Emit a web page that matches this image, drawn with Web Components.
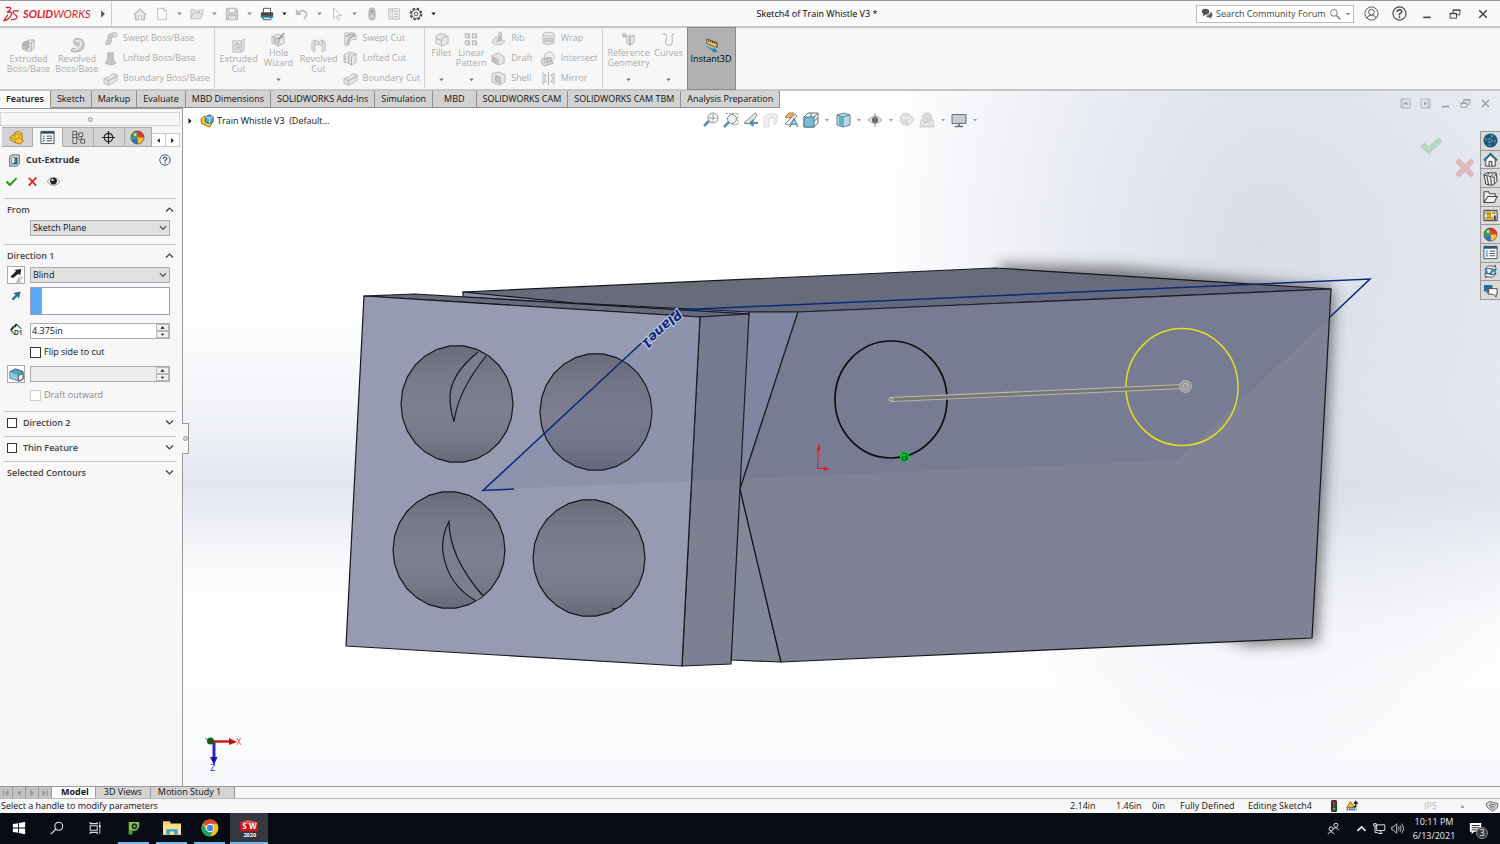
<!DOCTYPE html>
<html lang="en">
<head>
<meta charset="utf-8">
<title>SOLIDWORKS - Sketch4 of Train Whistle V3</title>
<style>
	body {
		margin: 0;
		font-family: "Open Sans", "Noto Sans", sans-serif;
		font-size: 9px;
		line-height: 12px;
		color: #111;
	}
</style>
</head>
<body>
<cad-app></cad-app>

<script>
/*
Icons, all drawn on a 16 x 16 grid
*/
const G = 'fill="#e6e6e6" stroke="#b9b9b9"';
const ICONS = {
	caret: '<path d="M4 6h8l-4 5z" fill="currentColor"/>',
	play: '<path d="M5 2v12l6-6z" fill="currentColor"/>',
	back: '<path d="M11 3v10L5 8z" fill="currentColor"/>',
	up: '<path d="M3 11h10L8 5z" fill="currentColor"/>',
	chevup: '<path d="M3 11l5-5 5 5" fill="none" stroke="currentColor" stroke-width="2"/>',
	chevdown: '<path d="M3 5l5 5 5-5" fill="none" stroke="currentColor" stroke-width="2"/>',
	dslogo: '<g fill="none" stroke="#d8232a" stroke-width="1.3"><path d="M3 1.500h4q1.500.5 0 2.500L4 6.500q5-1.500 4.500 1.500C8 11 5 14 1 14.500L5 8.500"/><path d="M15.500 5q-5-1-5.500 1.500c0 2 4 2 4 4.500q-.5 3-6 2.500"/></g>',
	home: `<path d="M1 9l7-7 7 7M3 8v6.500h10V8" ${G} stroke-width="1.400"/><path d="M6.500 14.500v-5h3v5" fill="#fff" stroke="#b9b9b9"/>`,
	newdoc: '<path d="M3 1.500h7l3 3v10H3zM10 1.500v3h3" fill="#f9f9f9" stroke="#bcbcbc"/>',
	open: `<path d="M1 13V3h4l1 1.500h5V7M1 13.500L4 7h11l-3 6.500z" ${G}/><path d="M10 4q2-3 4 0l-1.500.5 2.500 1V2" fill="none" stroke="#bbb"/>`,
	save: `<path d="M1.500 1.500h11l2 2v11h-13z" fill="#cfcfcf" stroke="#b5b5b5"/><path d="M4.500 1.500h7v5h-7zM4 9.500h8v5H4zM5 11.500h6" fill="#f5f5f5" stroke="#b5b5b5"/>`,
	print: '<path d="M4 7V1.500h8V7" fill="#fff" stroke="#444"/><rect x="1" y="6" width="14" height="5" rx="1" fill="#484848"/><path d="M1 10h14v2.500H1z" fill="#2a83a8"/><path d="M3.500 11.500h9v3h-9z" fill="#d8eef5" stroke="#33596b"/>',
	undo: '<path d="M2 3v5h5M2.500 7.500Q7 2.500 11.500 5q4 4-1.500 8.500" fill="none" stroke="#bdbdbd" stroke-width="2"/>',
	cursor: '<path d="M4 1v12l3-3 2 5 2-1-2-4.500h4z" fill="#fafafa" stroke="#bcbcbc"/>',
	rebuild: '<rect x="4.500" y="1" width="7" height="14" rx="3.500" fill="#c2c2c2" stroke="#a9a9a9"/><circle cx="8" cy="5" r="1.500" fill="#989898"/><circle cx="8" cy="10.500" r="1.500" fill="#ddd"/>',
	options: '<path d="M2 2h12v12H2zM6 2v12" fill="#f0f0f0" stroke="#bdbdbd"/><path d="M3.500 5h1M3.500 8h1M3.500 11h1M8 5h4.500M8 8h4.500M8 11h4.500" stroke="#b4b4b4"/>',
	gear: '<circle cx="8" cy="8" r="6.300" fill="none" stroke="#4a4a4a" stroke-width="2" stroke-dasharray="3 1.950"/><circle cx="8" cy="8" r="5" fill="#f8f8f8" stroke="#4a4a4a"/><circle cx="8" cy="8" r="2" fill="none" stroke="#4a4a4a"/>',
	chat: '<path d="M1 5q0-4 5-4t5 4-5 4l-3 2V8Q1 7 1 5z" fill="#555"/><path d="M6 10q6 0 6.500-5Q16 6 15.500 9q0 2-1.500 3v2.500L11 13q-4 0-5-3z" fill="#555" stroke="#fff" stroke-width=".7"/>',
	search: '<circle cx="6.500" cy="6.500" r="4.500" fill="none" stroke="currentColor" stroke-width="1.300"/><path d="M10 10l5 5" stroke="currentColor" stroke-width="1.800"/>',
	user: '<circle cx="8" cy="8" r="7" fill="none" stroke="#555"/><circle cx="8" cy="6.500" r="3" fill="none" stroke="#555"/><path d="M3 13q1-3 4-3h2q3 0 4 3" fill="none" stroke="#555"/>',
	help: '<circle cx="8" cy="8" r="7" fill="none" stroke="currentColor" stroke-width="1.200"/><path d="M5.500 6.500Q5.500 4 8 4t2.500 2.200Q10.500 7.500 8 8.500V10M8 11v1.800" fill="none" stroke="currentColor" stroke-width="1.500"/>',
	min: '<path d="M3 12.500h10" stroke="currentColor" stroke-width="2.200"/>',
	restore: '<path d="M5.500 7V2.500h9V9H10M1.500 7H10v6.500H1.500z" fill="none" stroke="currentColor" stroke-width="1.300"/><path d="M5 3h10M1 7.500h9" stroke="currentColor" stroke-width="1.500"/>',
	close: '<path d="M3 3l10 10M13 3L3 13" stroke="currentColor" stroke-width="2"/>',
	dockleft: '<path d="M1.500 1.500h13v13h-13zM4.500 1.500v13" fill="none" stroke="currentColor"/><path d="M10.500 5v6L6 8z" fill="currentColor"/>',
	dockright: '<path d="M1.500 1.500h13v13h-13zM11.500 1.500v13" fill="none" stroke="currentColor"/><path d="M6 5v6l4-3z" fill="currentColor"/>',
	exboss: `<path d="M5 4l3-2h6v9l-3 3H5z" ${G}/><path d="M1.500 6l2-2h5v6l-2 2h-5z" fill="#bdbdbd" stroke="#aaa"/><path d="M1.500 6h5v6M6.500 6l2-2M11 14V5l3-3" fill="none" stroke="#aaa"/>`,
	revboss: '<path d="M5 1q8-2 10 4 1 6-4 9-5 2-10 0 0-3 3-3 5 1 5-2-2-1-4-2-3-3 0-6z" fill="#c9c9c9" stroke="#b0b0b0"/><path d="M6 3q5-1 6 3-1 5-8 7" fill="none" stroke="#f2f2f2" stroke-width="1.500"/>',
	sweep: '<path d="M3 12q5 1 4-4 0-4 5-4" fill="none" stroke="#b3b3b3" stroke-width="5"/><path d="M3 12q5 1 4-4 0-4 5-4" fill="none" stroke="#ccc" stroke-width="3"/><circle cx="12.500" cy="4" r="2.500" fill="#e4e4e4" stroke="#b3b3b3"/>',
	loft: '<path d="M5 2l6 0v7l3 4-5 2-7-2 3-4z" fill="#c4c4c4" stroke="#b3b3b3"/><path d="M5 2l3 1 3-1" fill="#eee" stroke="#b3b3b3"/>',
	boundary: `<path d="M1 8q6-1 9-5l5 1v6q-4 3-9 5l-5-2z" ${G}/><path d="M1 8l5 2q6-2 9-6M6 10v5M3 11q6-1 11-5" fill="none" stroke="#b3b3b3"/>`,
	excut: `<path d="M2 3h9l3-2v12l-3 2H2z" ${G}/><path d="M11 3v12M4.500 6h4v6h-4zM6.500 6v4h2" fill="#f8f8f8" stroke="#b0b0b0"/>`,
	hole: `<path d="M1 5l6-3 7 3v7l-6 3-7-3z" ${G}/><path d="M1 5l7 3 6-3M8 8v7" fill="none" stroke="#b3b3b3"/><circle cx="6" cy="9" r="3" fill="#ccc" stroke="#aaa"/><path d="M8 8l6-7" stroke="#999" stroke-width="1.800"/>`,
	revcut: `<path d="M1 4l3-2 4 2 4-2 3 2v9l-3 2V8q-4-3-8 0v7l-3-2z" ${G}/><path d="M4 2v6M12 2v6M8 4v3" stroke="#b0b0b0"/>`,
	swcut: `<path d="M2 2h10l2 2v5h-3q-4 0-5 6H2z" ${G}/><path d="M5 14q0-8 8-9M3 6q4-3 10-2" fill="none" stroke="#aaa" stroke-width="1.500"/>`,
	lfcut: `<path d="M1 4l6-3 7 2v9l-5 3-3-2-5-1z" ${G}/><path d="M6 13V5l3-2M9 15V6l5-3M2 5v6" fill="none" stroke="#aaa"/>`,
	fillet: `<path d="M2 6q0-3 3-4h6l4 3v7l-6 3-7-3z" ${G}/><path d="M2 7l6 2q0-4 6-4M8 9v6" fill="none" stroke="#b3b3b3"/>`,
	pattern: '<path d="M1.500 2h4v4h-4zM9 2h4v4H9zM1.500 9.500h4v4h-4zM9 9.500h4v4H9z" fill="#eee" stroke="#b9b9b9" stroke-width="1.200"/><path d="M4 3l2 1v3M11.500 3l2 1v3M4 10.500l2 1v3M11.500 10.500l2 1v3" fill="none" stroke="#b9b9b9"/>',
	rib: `<path d="M1 12l3-5 4-1V2l3-1v8l4 2-3 3-7 1z" ${G}/><path d="M5 12l6-10v9z" fill="#bbb"/>`,
	draft: `<path d="M1 5l7-3 6 4v7l-6 2-7-4z" ${G}/><path d="M1 5l7 4v6l-7-4z" fill="#bdbdbd"/>`,
	shell: `<path d="M1 3l7-2 7 3v8l-6 3-8-3z" ${G}/><path d="M5 5l5 2v6l-5-2z" fill="#c5c5c5" stroke="#aaa"/>`,
	wrap: `<path d="M2 3v10q6 3 12 0V3z" ${G}/><ellipse cx="8" cy="3.500" rx="6" ry="2" fill="#eee" stroke="#b9b9b9"/><path d="M4 8h3v3H4zM9 8h3v3H9z" fill="none" stroke="#aaa"/>`,
	intersect: '<circle cx="9" cy="6" r="5" fill="#eee" stroke="#b5b5b5"/><path d="M1 8l3-1v6l8-2 1 2-9 3-3-2z" fill="#ddd" stroke="#b0b0b0"/><path d="M6 7h5v4l-5 1z" fill="#c9c9c9" stroke="#b0b0b0"/>',
	mirror: '<path d="M2 2v12l4-3H4V5h2zM14 2v12l-4-3h2V5h-2z" fill="#eee" stroke="#b9b9b9"/><path d="M8 1v14" stroke="#aaa"/>',
	refgeo: `<circle cx="3.500" cy="3.500" r="2" fill="#ccc" stroke="#b0b0b0"/><path d="M6 4l3 1v9l-3-2zM10 5l4-2v8l-4 3z" ${G}/><path d="M9.500 2v13" stroke="#b9b9b9"/>`,
	curves: '<path d="M2 2q5 0 4 4-3 7 1 8 6 1 5-7-1-5 2-5" fill="none" stroke="#b9b9b9" stroke-width="1.200"/>',
	instant: '<path d="M3 1l11 4v5L3 6z" fill="#ffd23f" stroke="#222" stroke-width=".7"/><path d="M5 2v2M7 3v2M9 3.500v2M11 4v2M13 5v2" stroke="#222"/><path d="M1 8l9 4 .5-2 4.500 5-6 .5.500-1.500z" fill="#2d86ad"/>',
	part: '<path d="M1 8l3-3 2 1V3l4-2 4 3v5l1 3-3 3-4-1-6-3z" fill="#f7c834" stroke="#8a6410" stroke-width=".8"/><path d="M1 8l6 2v4M7 10l4-2 4 3M11 8V5l3-1M6 3l5 2M6 6v2" fill="none" stroke="#a97c17" stroke-width=".8"/>',
	partbox: '<path d="M1 6l3-3h4l6 7-3 5-9-4z" fill="#f7c834" stroke="#8a6410"/><path d="M6 3l5-2 4 2v6l-4 2-5-2z" fill="#5aa9c9" stroke="#155a78"/><path d="M6 3l5 2 4-2M11 5v6" fill="none" stroke="#e3f4fb"/>',
	plist: '<path d="M1 1.500h14v13H1z" fill="#fff" stroke="#34576b"/><path d="M1 1h14v3H1z" fill="#34576b"/><path d="M3 6.500h2M3 9h2M3 11.500h2" stroke="#2584ac" stroke-width="1.500"/><path d="M7 6.500h6M7 9h6M7 11.500h6" stroke="#444"/>',
	config: '<path d="M2 1.500h4v13H2z" fill="#ddd" stroke="#555"/><path d="M8.500 3h4v4h-4zM10.500 10h4v4h-4z" fill="#ddd" stroke="#555"/><path d="M2 5h4M2 8h4M6 4l2.500 1M6 7l4.500 5M11 7v3" fill="none" stroke="#555"/>',
	target: '<circle cx="8" cy="8" r="4.500" fill="none" stroke="#222" stroke-width="1.300"/><path d="M8 1v14M1 8h14" stroke="#222" stroke-width="1.300"/>',
	ball: '<circle cx="8" cy="8" r="7" fill="#f4c430"/><path d="M8 8L7 1a7 7 0 0 0-5.500 9.500z" fill="#35a547"/><path d="M8 8L7 1q7-.5 8 7z" fill="#e23a2e"/><path d="M8 8L1.500 10.500q2 4.500 7 4.500z" fill="#2d6fd0"/><circle cx="8" cy="8" r="7" fill="none" stroke="#333" stroke-width=".6"/><circle cx="5.500" cy="5" r="1.500" fill="#fff" opacity=".7"/>',
	cutfeat: '<path d="M2 3l3-2h9v11l-3 3H2z" fill="#c7ccd0" stroke="#5a6166"/><path d="M5 5h6v7H5z" fill="#2584ac" stroke="#333"/><path d="M5 5h3v5l-3 2z" fill="#f2f2f2"/>',
	tick: '<path d="M1 9l2-2 3 3.500L13.500 3l1.500 1.500L6 14z" fill="#2a9a13"/>',
	cross: '<path d="M3.500 3.500l9 9.500M12.500 3l-9 10" stroke="#df2716" stroke-width="2.200"/>',
	bigtick: '<path d="M1 9l2.500-2.500L6.500 9 13 3l2.500 2.500-9 8.500z" fill="#3fae3a" stroke="#2d8a2d" stroke-width=".5"/>',
	bigcross: '<path d="M4 4l8 8M12 4l-8 8" stroke="#dc3434" stroke-width="4" stroke-linecap="round"/>',
	eye: '<path d="M0 8q8-10 16 0-8 10-16 0z" fill="#fff" stroke="#777"/><circle cx="8" cy="7.500" r="4.200" fill="#222"/><circle cx="6.800" cy="6" r="1.300" fill="#fff"/>',
	reverse: '<path d="M1.500 9l6-5.500L6 2l7-1-1 7-2-2-6 5z" fill="#222"/><path d="M14.500 9l-4 4v-3l-2 5 5-.5" fill="none" stroke="#bbb" stroke-width="1.500"/>',
	arrowblue: '<path d="M2 12l5-5-3-2 9-2-2 9-2-3-5 5z" fill="#1f7094"/>',
	depth: '<path d="M1 9l7-7 6 5M1 9l5 5M3 5l4-2M2 7l5-5" fill="none" stroke="#2a7393" stroke-width="1.500"/><path d="M1 9l3-4M8 1l-2 4" stroke="#222" stroke-width="2"/><text x="5" y="15" font-size="8" font-weight="600" fill="#222">D1</text>',
	draftbtn: '<path d="M1 5l6-3 8 3v8l-4 2-10-3z" fill="#4d9ec0" stroke="#1f5670"/><path d="M1 5l9 4v6l-9-3z" fill="#8ec6da"/><path d="M10 9l5-2v6l-5 2z" fill="#f2f2f2" stroke="#555"/>',
	zoomfit: '<circle cx="10" cy="6" r="5" fill="#f5f8fa" stroke="#777"/><path d="M10 2.500v7M6.500 6h7" fill="none" stroke="#555" stroke-dasharray="2 1"/><path d="M6 9l-5 5" stroke="#2f7fa5" stroke-width="2.500"/>',
	zoomarea: '<path d="M3 1.500h12v11H8" fill="none" stroke="#888" stroke-dasharray="2 1"/><circle cx="9" cy="7" r="4.500" fill="#e6f0f5" stroke="#777"/><path d="M6 10l-5 5" stroke="#2f7fa5" stroke-width="2.500"/>',
	prev: '<path d="M1 11L12 1l2 2-6 9zM1 11l4 1" fill="#ddd" stroke="#777"/><path d="M15 11H8M10.500 8l-3 3 3 3" fill="none" stroke="#2f7fa5" stroke-width="2"/>',
	section: `<path d="M1 5l4-3h9v8l-3 3V6H6v9H1z" fill="#eee" stroke="#d2d2d2"/>`,
	display: '<path d="M2 5l4-4h5l-4 5z" fill="#f5a33a" stroke="#a8601a"/><path d="M2 12L12 2l2 2-8 9z" fill="#eee" stroke="#777"/><path d="M7 15l4-8 4 8M9 12h4" fill="none" stroke="#2f7fa5" stroke-width="1.500"/>',
	orient: '<path d="M1 5l4-4h10v10l-4 4H1z" fill="#eaf1f5" stroke="#555"/><path d="M1 5h10v10H1z" fill="#62aecd" stroke="#28637d"/><path d="M11 5l4-4M8 1v4M11 9l4-3" stroke="#555"/>',
	style: '<path d="M2 3l7-2 6 2v10l-7 2-6-2z" fill="#aad4e5" stroke="#486c7d"/><path d="M2 3l6 2v10M8 5l7-2" fill="none" stroke="#486c7d"/><path d="M4 4l4 1v9l-4-1z" fill="#4d9ec0"/>',
	hide: '<path d="M1 8q7-8 14 0-7 7-14 0z" fill="#ddd" stroke="#999"/><circle cx="8" cy="8" r="3" fill="#444"/><path d="M8 1v14" stroke="#777"/>',
	appear: '<circle cx="7" cy="7" r="6" fill="#d9d9d9" stroke="#ccc"/><path d="M7 10l6-5 2 3-6 6z" fill="#e6e6e6" stroke="#c4c4c4"/><path d="M2 6h10" stroke="#eee" stroke-width="1.500"/>',
	scene: '<path d="M1 15l1-7h12l1 7z" fill="#e6e6e6" stroke="#c4c4c4"/><circle cx="8" cy="6" r="5" fill="#d4d4d4" stroke="#c4c4c4"/><path d="M3 14q5-7 10 0z" fill="#f2f2f2" stroke="#c4c4c4"/>',
	monitor: '<path d="M1 2.500h14v9H1z" fill="#bcc4ca" stroke="#555"/><path d="M8 11.500V14M4 14.500h8" stroke="#555" stroke-width="1.500"/>',
	wheel: '<circle cx="8" cy="8" r="7.500" fill="#1c5a7d"/><circle cx="8" cy="8" r="5" fill="none" stroke="#7db4cf" stroke-width="1.300" stroke-dasharray="2 5.850"/><path d="M6.500 5.500v5l4-2.500z" fill="#123e57" stroke="#9cc9de" stroke-width=".7"/>',
	house: '<path d="M3 8v7h10V8L8 3z" fill="#fff" stroke="#333"/><path d="M1 9l7-7 7 7" fill="none" stroke="#1f7094" stroke-width="2.200"/><path d="M6.500 15v-5h3v5" fill="#ddd" stroke="#333"/>',
	books: '<path d="M1 4l3-2h10l1 9-4 4H7l-4-1z" fill="#eee" stroke="#333"/><path d="M1 4l3 1 2 10M4 5l3-3M5 5l3 1 1 9M8 6l3-3M9 6l3 1v7M12 6l2-3" fill="none" stroke="#333"/>',
	folder: '<path d="M1 14V3h5l1 2h6v3M1 14.500L5 8h10l-3 6.500z" fill="#f3f3f3" stroke="#444" stroke-width="1.100"/>',
	palette: '<path d="M1 2.500h14v11H1z" fill="#eee" stroke="#333"/><path d="M3 4h5v2.500H3zM3 10h7v2.500H3zM5 6.500h3V10H5zM10 4h3v2h-3z" fill="#f4c21f" stroke="#8a6a08" stroke-width=".6"/><path d="M12.500 8v5" stroke="#333" stroke-width="2"/>',
	globe: '<circle cx="8" cy="8" r="6" fill="#3b93cc"/><path d="M4 6l3-2 2 3-3 3zM9 10l3-2v3z" fill="#e9f4fa"/><path d="M2 6q3-6 10-3l1-2 1 5-5-1q-4-1-7 1zM14 10q-3 6-10 3l-1 2-1-5 5 1q4 1 7-1z" fill="#fff" stroke="#333" stroke-width=".8"/>',
	forum: '<path d="M1 2h9v7H6l-2 3V9H1z" fill="#1f7094"/><path d="M6 6h9v6h-1v3l-3-3H6z" fill="#fff" stroke="#444"/>',
	first: '<path d="M4 3v10" stroke="currentColor" stroke-width="1.500"/><path d="M12 3v10L6 8z" fill="currentColor"/>',
	last: '<path d="M12 3v10" stroke="currentColor" stroke-width="1.500"/><path d="M4 3v10l6-5z" fill="currentColor"/>',
	light: '<rect x="4" y="0" width="8" height="16" rx="2" fill="#333"/><circle cx="8" cy="4" r="2" fill="#d33"/><circle cx="8" cy="8" r="1.500" fill="#754"/><circle cx="8" cy="12" r="2" fill="#2b4"/>',
	warn: '<path d="M1 10l5-8 5 8z" fill="#f7b52c" stroke="#7a4a00"/><path d="M10 9h3V3M10.500 5L13 2l2.500 3" fill="none" stroke="#222" stroke-width="1.800"/><path d="M1 12.500h13" stroke="#1f7094" stroke-width="3" stroke-dasharray="2 1"/>',
	tag: '<path d="M0 5l5-3 11 3-1 5-6 5-7-5z" fill="#ddd" stroke="#444"/><path d="M5 5l8 2M4 7l8 3M5 9l5 3" stroke="#444"/>',
	windows: '<path d="M1 3.500l6-1v5H1zM8 2.300L15 1v6.500H8zM1 8.500h6v5l-6-1zM8 8.500h7V15l-7-1.300z" fill="#fff"/>',
	glass: '<circle cx="10" cy="6" r="4.500" fill="none" stroke="#e8e8e8" stroke-width="1.200"/><path d="M7 9l-6 6" stroke="#e8e8e8" stroke-width="1.400"/>',
	taskview: '<path d="M2.500 5.500h8v5h-8zM2.500 1v2h8V1M2.500 15v-2h8v2" fill="none" stroke="#ddd" stroke-width="1.200"/><path d="M13.500 1v14" stroke="#ddd"/><path d="M12.500 5h2v2h-2z" fill="#fff"/>',
	pluto: '<path d="M2 1h12q1 9-5 10H6v4H2z" fill="#8cc63f"/><path d="M2 11l4-2v6H2z" fill="#4c9c2e"/><circle cx="8.500" cy="6" r="3.300" fill="#1d3327"/><circle cx="8.500" cy="6" r="1.200" fill="#8ee0a0"/>',
	explorer: '<path d="M0 2h6l1 2h9v10H0z" fill="#f6cf63"/><path d="M0 5h16v9H0z" fill="#fbe08c"/><path d="M3 14V9h10v5h-3v-3H6v3z" fill="#39a0d8"/>',
	chrome: '<circle cx="8" cy="8" r="7.500" fill="#f4c20d"/><path d="M8 8L1.500 4.300A7.500 7.500 0 0 1 14.500 4.300H8z" fill="#db4437"/><path d="M1.500 4.200A7.500 7.500 0 0 0 8 15.500L11 10 5 10z" fill="#1da462"/><circle cx="8" cy="8" r="3.700" fill="#fff"/><circle cx="8" cy="8" r="2.900" fill="#4285f4"/>',
	sw: '<path d="M0 3l7-2 9 2v8H0z" fill="#c4161c"/><path d="M0 3l7-2 9 2-6 2z" fill="#e4575b"/><text x="2" y="9" font-size="7" font-weight="700" fill="#fff">S</text><text x="8" y="9" font-size="7" font-weight="700" fill="#fff">W</text><text x="3" y="16" font-size="5" font-weight="700" fill="#fff">2020</text>',
	people: '<g fill="none" stroke="#e4e4e4" stroke-width="1.200"><circle cx="11" cy="4" r="2.500"/><path d="M7.500 9q3.500-4 7 1"/><circle cx="5" cy="8.500" r="2.500"/><path d="M1 15q4-6 8 0"/></g>',
	network: '<path d="M4.500 3.500h10v7h-10zM9.500 10.500V14M6 14h6M1 2h3v3H1zM2.500 5v8H6" fill="none" stroke="#e4e4e4" stroke-width="1.200"/>',
	speaker: '<path d="M1 6h2l4-4v12l-4-4H1zM9 5.500q2 2.500 0 5M11 4q3 4 0 8M13 2q4.500 6 0 12" fill="none" stroke="#e4e4e4"/>',
	note: '<path d="M1 1h13v10H6l-3 3v-3H1z" fill="#fff"/><path d="M3 4h9M3 6.500h9M3 9h6" stroke="#111"/>'
};

class SwIcon extends HTMLElement {
	constructor() {
		super();
		this.attachShadow({ mode: 'open' });
	}
	connectedCallback() {
		this.shadowRoot.innerHTML = `
			<style>
				:host { display: inline-block; width: var(--icon, 14px); height: var(--icon, 14px); flex: none; }
				svg { display: block; width: 100%; height: 100%; overflow: visible; }
			</style>
			<svg viewBox="0 0 16 16" aria-hidden="true">${ICONS[this.getAttribute('name')] || ''}</svg>`;
	}
}
customElements.define('sw-icon', SwIcon);

// small helper: every component below is a static template in a shadow root
function define(name, html, setup) {
	const template = document.createElement('template');
	template.innerHTML = html;
	customElements.define(name, class extends HTMLElement {
		constructor() {
			super();
			this.attachShadow({ mode: 'open' });
			this.shadowRoot.appendChild(template.content.cloneNode(true));
		}
		connectedCallback() {
			if (setup && !this.ready) {
				this.ready = true;
				setup(this, this.shadowRoot);
			}
		}
	});
}

const RESET = `
	* { box-sizing: border-box; }
	button { font: inherit; color: inherit; background: none; border: 0; padding: 0; margin: 0; display: flex; align-items: center; justify-content: center; }
	input, select { font: inherit; color: inherit; margin: 0; }
`;

/*
Title bar
*/
define('title-bar', `
	<style>
		${RESET}
		:host { display: flex; align-items: center; height: 28px; box-sizing: border-box; background: #f9f9f9; border-top: 1px solid #999; border-bottom: 2px solid #c6c6c6; --icon: 14px; }
		.logo { display: flex; align-items: center; gap: 4px; width: 112px; height: 100%; padding-left: 3px; border-right: 1px solid #ccc; color: #d8232a; font: italic 11px/14px "Lato", sans-serif; }
		.logo sw-icon { --icon: 16px; }
		.logo button { margin-left: auto; margin-right: 3px; color: #555; }
		.logo button sw-icon { --icon: 10px; }
		nav { display: flex; align-items: center; gap: 4px; padding-left: 19px; color: #888; }
		nav button { width: 18px; height: 20px; }
		nav button.c { width: 9px; --icon: 9px; }
		h1 { flex: 1; margin: 0; text-align: center; font-size: 9px; font-weight: 400; color: #000; }
		label { display: flex; align-items: center; gap: 3px; width: 158px; height: 18px; padding: 0 1px 0 4px; border: 1px solid #bbb; background: #fff; color: #777; --icon: 12px; }
		input { flex: 1; min-width: 0; border: 0; padding: 0; outline: 0; background: none; }
		input::placeholder { color: #444; opacity: 1; }
		.win { display: flex; align-items: center; color: #444; padding: 0 3px; }
		.win button { width: 28px; height: 20px; }
	</style>
	<div class="logo"><sw-icon name="dslogo"></sw-icon><span><b>SOLID</b>WORKS</span><button aria-label="Menu"><sw-icon name="play"></sw-icon></button></div>
	<nav>
		<button aria-label="Home"><sw-icon name="home"></sw-icon></button>
		<button aria-label="New"><sw-icon name="newdoc"></sw-icon></button><button class="c" aria-label="New options"><sw-icon name="caret"></sw-icon></button>
		<button aria-label="Open"><sw-icon name="open"></sw-icon></button><button class="c" aria-label="Open options"><sw-icon name="caret"></sw-icon></button>
		<button aria-label="Save"><sw-icon name="save"></sw-icon></button><button class="c" aria-label="Save options"><sw-icon name="caret"></sw-icon></button>
		<button aria-label="Print"><sw-icon name="print"></sw-icon></button><button class="c" style="color: #222" aria-label="Print options"><sw-icon name="caret"></sw-icon></button>
		<button aria-label="Undo"><sw-icon name="undo"></sw-icon></button><button class="c" aria-label="Undo options"><sw-icon name="caret"></sw-icon></button>
		<button aria-label="Select"><sw-icon name="cursor"></sw-icon></button><button class="c" aria-label="Select options"><sw-icon name="caret"></sw-icon></button>
		<button aria-label="Rebuild"><sw-icon name="rebuild"></sw-icon></button>
		<button aria-label="File properties"><sw-icon name="options"></sw-icon></button>
		<button aria-label="Options"><sw-icon name="gear"></sw-icon></button><button class="c" style="color: #222" aria-label="More options"><sw-icon name="caret"></sw-icon></button>
	</nav>
	<h1>Sketch4 of Train Whistle V3 *</h1>
	<label><sw-icon name="chat"></sw-icon><input type="text" placeholder="Search Community Forum" aria-label="Search Community Forum"><sw-icon name="search"></sw-icon><sw-icon name="caret" style="--icon: 8px"></sw-icon></label>
	<div class="win">
		<button aria-label="Account"><sw-icon name="user" style="--icon: 15px"></sw-icon></button>
		<button aria-label="Help"><sw-icon name="help" style="--icon: 15px"></sw-icon></button>
		<button aria-label="Minimize"><sw-icon name="min" style="--icon: 12px"></sw-icon></button>
		<button aria-label="Restore"><sw-icon name="restore" style="--icon: 12px"></sw-icon></button>
		<button aria-label="Close"><sw-icon name="close" style="--icon: 12px"></sw-icon></button>
	</div>
`);

/*
Ribbon
*/
define('ribbon-group', `
	<style>
		:host { display: flex; height: 60px; padding: 0 var(--end, 4px) 0 4px; border-right: 1px solid #d0d0d0; }
	</style>
	<slot></slot>
`);

define('ribbon-column', `
	<style>
		:host { display: flex; flex-direction: column; justify-content: space-between; padding-left: 2px; }
	</style>
	<slot></slot>
`);

define('ribbon-button', `
	<style>
		${RESET}
		:host { display: block; color: #acacac; }
		button { gap: 5px; height: 20px; white-space: nowrap; --icon: 15px; }
		:host([big]) { width: var(--w, 40px); }
		:host([big]) button { flex-direction: column; justify-content: flex-start; gap: 1px; width: 100%; height: 100%; padding-top: 10px; line-height: 10px; }
		:host([menu]) button { padding-top: 4px; }
		.menu { display: none; }
		:host([menu]) .menu { display: block; margin-top: auto; padding-bottom: 3px; line-height: 8px; color: #777; }
		.menu sw-icon { --icon: 9px; }
		:host([pressed]) { color: #000; background: #b1b1b1; outline: 1px solid #888; }
	</style>
	<button><sw-icon></sw-icon><span><slot></slot></span><span class="menu"><sw-icon name="caret"></sw-icon></span></button>
`, (host, root) => {
	const icon = root.querySelector('sw-icon');
	icon.setAttribute('name', host.getAttribute('icon'));
	icon.connectedCallback();
});

define('command-ribbon', `
	<style>
		:host { display: flex; height: 63px; box-sizing: border-box; background: #f7f7f7; border-bottom: 2px solid #c6c6c6; }
	</style>
	<ribbon-group>
		<ribbon-button big icon="exboss" style="--w: 49px">Extruded<br>Boss/Base</ribbon-button>
		<ribbon-button big icon="revboss" style="--w: 48px">Revolved<br>Boss/Base</ribbon-button>
		<ribbon-column>
			<ribbon-button icon="sweep">Swept Boss/Base</ribbon-button>
			<ribbon-button icon="loft">Lofted Boss/Base</ribbon-button>
			<ribbon-button icon="boundary">Boundary Boss/Base</ribbon-button>
		</ribbon-column>
	</ribbon-group>
	<ribbon-group>
		<ribbon-button big icon="excut">Extruded<br>Cut</ribbon-button>
		<ribbon-button big menu icon="hole">Hole<br>Wizard</ribbon-button>
		<ribbon-button big icon="revcut">Revolved<br>Cut</ribbon-button>
		<ribbon-column style="padding-left: 4px">
			<ribbon-button icon="swcut">Swept Cut</ribbon-button>
			<ribbon-button icon="lfcut">Lofted Cut</ribbon-button>
			<ribbon-button icon="boundary">Boundary Cut</ribbon-button>
		</ribbon-column>
	</ribbon-group>
	<ribbon-group>
		<ribbon-button big menu icon="fillet" style="--w: 24px">Fillet</ribbon-button>
		<ribbon-button big menu icon="pattern" style="--w: 36px">Linear<br>Pattern</ribbon-button>
		<ribbon-column>
			<ribbon-button icon="rib">Rib</ribbon-button>
			<ribbon-button icon="draft">Draft</ribbon-button>
			<ribbon-button icon="shell">Shell</ribbon-button>
		</ribbon-column>
		<ribbon-column style="padding-left: 8px">
			<ribbon-button icon="wrap">Wrap</ribbon-button>
			<ribbon-button icon="intersect">Intersect</ribbon-button>
			<ribbon-button icon="mirror">Mirror</ribbon-button>
		</ribbon-column>
	</ribbon-group>
	<ribbon-group style="--end: 0">
		<ribbon-button big menu icon="refgeo" style="--w: 44px">Reference<br>Geometry</ribbon-button>
		<ribbon-button big menu icon="curves" style="--w: 36px">Curves</ribbon-button>
	</ribbon-group>
	<ribbon-button big pressed icon="instant" style="--w: 47px">Instant3D</ribbon-button>
`);

define('command-tabs', `
	<style>
		${RESET}
		:host { display: flex; height: 17px; }
		button { height: 17px; padding: 0 6px; background: #d3d3d3; border-right: 1px solid #909090; border-bottom: 1px solid #909090; white-space: nowrap; }
		button[aria-selected=true] { background: #f9f9f9; border-bottom-color: #f9f9f9; font-weight: 600; }
		.wide { padding: 0 11px; }
	</style>
	<button role="tab" aria-selected="true">Features</button>
	<button role="tab">Sketch</button>
	<button role="tab">Markup</button>
	<button role="tab">Evaluate</button>
	<button role="tab">MBD Dimensions</button>
	<button role="tab">SOLIDWORKS Add-Ins</button>
	<button role="tab">Simulation</button>
	<button role="tab" class="wide">MBD</button>
	<button role="tab">SOLIDWORKS CAM</button>
	<button role="tab">SOLIDWORKS CAM TBM</button>
	<button role="tab">Analysis Preparation</button>
`);

/*
Property manager
*/
define('prop-section', `
	<style>
		${RESET}
		:host { display: block; margin: 0 6px 0 4px; border-top: 1px solid #c4c4c4; }
		header { display: flex; align-items: center; height: 21px; margin-bottom: 3px; padding: 0 1px 0 3px; font-weight: 600; color: #444; }
		header label { display: flex; align-items: center; gap: 6px; }
		header button { margin-left: auto; --icon: 11px; }
		input { appearance: none; width: 10px; height: 10px; border: 1px solid #333; background: #fff; }
	</style>
	<header><label><span></span></label><button><sw-icon></sw-icon></button></header>
	<slot></slot>
`, (host, root) => {
	const title = host.getAttribute('title-text');
	root.querySelector('label span').textContent = title;
	if (host.hasAttribute('checkable')) {
		const box = document.createElement('input');
		box.type = 'checkbox';
		root.querySelector('label').prepend(box);
	}
	root.querySelector('button').setAttribute('aria-label', 'Toggle ' + title);
	const icon = root.querySelector('sw-icon');
	icon.setAttribute('name', host.hasAttribute('open') ? 'chevup' : 'chevdown');
	icon.connectedCallback();
});

define('property-panel', `
	<style>
		${RESET}
		:host { display: flex; flex-direction: column; position: relative; width: 183px; flex: none; box-sizing: border-box; background: #f7f7f7; border-right: 1px solid #999; border-top: 1px solid #8c9ba0; }
		.grip { height: 14px; margin: 3px 2px 0 0; border: 1px solid #d4d4d4; display: flex; align-items: center; justify-content: center; }
		.grip i, .flyout i { width: 5px; height: 5px; border: 1px solid #999; border-radius: 50%; background: #ddd; }
		.tabs { display: flex; height: 20px; margin: 1px 2px 0 2px; }
		.tabs button { width: 31px; background: #d3d3d3; border: 1px solid #aaa; border-left: 0; --icon: 15px; }
		.tabs button.on { background: #f7f7f7; border-bottom-color: #f7f7f7; }
		.tabs button.cut { width: 28px; }
		.tabs button.nav { width: 14px; height: 14px; align-self: flex-end; background: #fff; border-color: #ccc; --icon: 7px; }
		.head { display: flex; align-items: center; gap: 5px; height: 26px; padding: 0 11px 0 8px; color: #333; --icon: 13px; }
		.head h2 { flex: 1; margin: 0; font-size: 9px; font-weight: 700; }
		.head button { color: #2c5366; --icon: 12px; }
		.acts { display: flex; align-items: center; gap: 8px; height: 25px; padding: 0 5px 8px; --icon: 13px; }
		.row { display: grid; grid-template-columns: 18px 140px; column-gap: 5px; align-items: center; padding-left: 3px; margin-bottom: 3px; }
		.tight { margin-top: -3px; }
		.end { margin-bottom: 8px; }
		.sq { width: 18px; height: 18px; border: 1px solid #aaa; background: #fff; --icon: 15px; }
		.mid { justify-self: center; align-self: start; margin-top: 2px; --icon: 13px; }
		.drop { display: grid; align-items: center; --icon: 10px; color: #555; }
		.drop > * { grid-area: 1 / 1; }
		.drop sw-icon { justify-self: end; margin-right: 2px; pointer-events: none; }
		select { appearance: none; width: 100%; height: 16px; padding: 0 2px; border: 1px solid #aaa; border-radius: 0; background: #e0e0e0; color: #111; }
		.list { display: flex; height: 28px; border: 1px solid #9a9fb5; background: #fff; }
		.list i { width: 11px; background: #55a8fa; border-right: 1px solid #9ab; }
		.spin { display: grid; grid-template-columns: 1fr 13px; height: 16px; border: 1px solid #aaa; background: #fff; }
		.spin input { grid-row: 1 / 3; min-width: 0; border: 0; padding: 0 1px; background: none; outline: 0; }
		.spin button { border: 1px solid #bbb; background: #f0f0f0; --icon: 7px; height: 7px; color: #111; overflow: hidden; }
		.off { background: #eee; }
		.check { display: flex; align-items: center; gap: 3px; height: 16px; padding-left: 26px; margin: 5px 0; }
		.check input { appearance: none; width: 11px; height: 11px; border: 1px solid #333; background: #fff; }
		.check.dim { color: #888; margin: 4px 0 8px; }
		.check.dim input { border-color: #ccc; }
		.flyout { position: absolute; z-index: 2; top: 314px; right: -7px; width: 7px; height: 31px; border: 1px solid #999; border-left: 0; background: #f7f7f7; display: flex; align-items: center; justify-content: center; }
	</style>
	<div class="grip"><i></i></div>
	<div class="tabs">
		<button aria-label="Feature tree"><sw-icon name="part"></sw-icon></button>
		<button class="on" aria-label="Property manager"><sw-icon name="plist"></sw-icon></button>
		<button aria-label="Configuration manager"><sw-icon name="config"></sw-icon></button>
		<button aria-label="DimXpert"><sw-icon name="target"></sw-icon></button>
		<button class="cut" aria-label="Display manager"><sw-icon name="ball"></sw-icon></button>
		<button class="nav" aria-label="Previous tabs"><sw-icon name="back"></sw-icon></button>
		<button class="nav" aria-label="Next tabs"><sw-icon name="play"></sw-icon></button>
	</div>
	<div class="head"><sw-icon name="cutfeat"></sw-icon><h2>Cut-Extrude</h2><button aria-label="Help"><sw-icon name="help"></sw-icon></button></div>
	<div class="acts">
		<button aria-label="OK"><sw-icon name="tick"></sw-icon></button>
		<button aria-label="Cancel"><sw-icon name="cross"></sw-icon></button>
		<button aria-label="Preview"><sw-icon name="eye"></sw-icon></button>
	</div>
	<prop-section title-text="From" open>
		<div class="row tight end"><span></span>
			<div class="drop"><select aria-label="From"><option>Sketch Plane</option></select><sw-icon name="chevdown"></sw-icon></div>
		</div>
	</prop-section>
	<prop-section title-text="Direction 1" open>
		<div class="row tight">
			<button class="sq" aria-label="Reverse direction"><sw-icon name="reverse"></sw-icon></button>
			<div class="drop"><select aria-label="End condition"><option>Blind</option></select><sw-icon name="chevdown"></sw-icon></div>
		</div>
		<div class="row end"><sw-icon class="mid" name="arrowblue"></sw-icon><div class="list"><i></i></div></div>
		<div class="row" style="margin-bottom: 0">
			<sw-icon class="mid" name="depth" style="margin-top: 0"></sw-icon>
			<div class="spin"><input value="4.375in" aria-label="Depth"><button aria-label="Increase depth"><sw-icon name="up"></sw-icon></button><button aria-label="Decrease depth"><sw-icon name="caret"></sw-icon></button></div>
		</div>
		<label class="check"><input type="checkbox">Flip side to cut</label>
		<div class="row">
			<button class="sq" aria-label="Draft"><sw-icon name="draftbtn"></sw-icon></button>
			<div class="spin off"><input disabled aria-label="Draft angle"><button aria-label="Increase draft"><sw-icon name="up"></sw-icon></button><button aria-label="Decrease draft"><sw-icon name="caret"></sw-icon></button></div>
		</div>
		<label class="check dim"><input type="checkbox" disabled>Draft outward</label>
	</prop-section>
	<prop-section title-text="Direction 2" checkable></prop-section>
	<prop-section title-text="Thin Feature" checkable></prop-section>
	<prop-section title-text="Selected Contours"></prop-section>
	<div class="flyout"><i></i></div>
`);

/*
Graphics area: the part, sketch and reference plane
*/
define('model-scene', `
	<style>
		:host { display: block; min-width: 0; min-height: 0; }
		svg { display: block; width: 100%; height: 100%; }
		.edge { stroke: #15161b; stroke-width: 1.200; stroke-linejoin: round; }
		text { font-family: "DejaVu Sans", sans-serif; }
	</style>
	<svg viewBox="183 108 1317 678" role="img" aria-label="Train whistle part">
		<defs>
			<linearGradient id="bore" x1="0" y1="0" x2="0" y2="1">
				<stop offset="0" stop-color="#696b7a"/><stop offset=".25" stop-color="#777989"/>
				<stop offset=".55" stop-color="#7e8092"/><stop offset=".8" stop-color="#777989"/><stop offset="1" stop-color="#676978"/>
			</linearGradient>
			<filter id="soft" x="-20%" y="-20%" width="140%" height="140%"><feGaussianBlur stdDeviation="7"/></filter>
		</defs>
		<polygon points="1000,264 1120,267 1333,288 1334,310 1318,642 1250,646 1000,560" fill="#333" opacity=".6" filter="url(#soft)"/>
		<g class="edge">
			<polygon points="463,292 463,297 749,314 798,312" fill="#878ca6"/>
			<polygon points="463,292 995,268 1331,289 798,312 749,312 575,303" fill="#686b7a"/>
			<polygon points="749,312 798,312 740,489 733,500" fill="#878ca6"/>
			<polygon points="740,489 781,662 731,660 733,480" fill="#83879a"/>
			<polygon points="798,312 1331,289 1312,638 781,662 740,489" fill="#7f8194"/>
			<polygon points="364,296 415,294 749,314 700,317" fill="#686b7a"/>
			<polygon points="700,317 749,314 731,664 682,666" fill="#7d7f92"/>
			<polygon points="364,296 700,317 682,666 346,646" fill="#979bb2"/>
		</g>
		<g id="bores" class="edge" fill="url(#bore)"></g>
		<g class="edge" fill="#7c7e90">
			<path d="M478 352Q451 374 450 396Q450 410 454 421.500Q458 391 486 356"/>
			<path d="M476 601Q448 585 443 553Q441 537 449 521Q449 557 483 596"/>
			<path d="M612 608l3 1" fill="none"/>
		</g>
		<polygon points="483,490 679,310 1331,281 1330,317 1177,460" fill="#465a87" opacity=".12"/>
		<path d="M514 489L483 490.500L677 310L1370 279L1330 317" fill="none" stroke="#0a2a78" stroke-width="1.500"/>
		<text transform="translate(677 309) rotate(137)" font-size="13" font-weight="700" font-style="italic" fill="#0a2a78" stroke="#c4cce6" stroke-width="2" paint-order="stroke">Plane1</text>
		<ellipse cx="891" cy="399.500" rx="56" ry="58.500" fill="none" stroke="#0d0f0d" stroke-width="1.700"/>
		<ellipse cx="1182" cy="387" rx="56" ry="58.500" fill="none" stroke="#dfe01e" stroke-width="1.500"/>
		<path d="M891 399.500L1184 386.500" stroke="#b9b9b5" stroke-width="5"/>
		<path d="M892 399.500L1184 386.500" stroke="#77776f" stroke-width="3"/>
		<circle cx="891" cy="399.500" r="2" fill="#888" stroke="#c5c5c5"/>
		<circle cx="1185.500" cy="386.500" r="6" fill="#9a9b9e" stroke="#b4b5b8"/>
		<circle cx="1185.500" cy="386.500" r="3" fill="#999" stroke="#c4c4c4"/>
		<path d="M900 452h9v9h-9z" fill="#0fbf3d"/><path d="M902 453l5 1v6M902 460v-3h4v3z" fill="none" stroke="#045016"/>
		<g stroke="#e8141c" fill="#e8141c"><path d="M818.500 447L817.500 468.500H825" fill="none"/><path d="M817 450l2-7 1.500 7zM824 467l6 2-6 1.500z" stroke="none"/></g>

		<path d="M214 742v15" stroke="#2c2cc0" stroke-width="3"/><path d="M210 757h7.500l-3.500 8z" fill="#1a1a9c"/>
		<path d="M213 741.500h18" stroke="#d01818" stroke-width="2.500"/><path d="M229 738l8 4-8 3z" fill="#c01010"/>
		<circle cx="210.500" cy="741" r="3.500" fill="#105c18"/><path d="M205 738l3 2" stroke="#2a9a3a"/>
		<text x="236" y="745" font-size="8" fill="#ff4040">X</text><text x="210" y="771" font-size="8" fill="#3a3aff">Z</text>
	</svg>
`, (host, root) => {
	// bores are faceted the way the display mesh is
	const centres = [[457, 404], [596, 412], [449, 550], [589, 558]];
	root.getElementById('bores').innerHTML = centres.map(([cx, cy]) => {
		const points = [];
		for (let i = 0; i < 26; i++) {
			const a = i * Math.PI / 13;
			points.push((cx + 56 * Math.cos(a)).toFixed(1) + ',' + (cy + 58.5 * Math.sin(a)).toFixed(1));
		}
		return `<polygon points="${points.join(' ')}"/>`;
	}).join('');
});

define('task-pane', `
	<style>
		${RESET}
		:host { display: flex; flex-direction: column; width: 20px; height: 169px; box-sizing: border-box; border: 1px solid #999; border-right: 0; --icon: 15px; }
		button { flex: 1; background: #dadada; border-bottom: 1px solid #999; }
		button:first-child { background: #fff; }
		button:last-child { border: 0; }
	</style>
	<button aria-label="3DEXPERIENCE"><sw-icon name="wheel"></sw-icon></button>
	<button aria-label="Resources"><sw-icon name="house"></sw-icon></button>
	<button aria-label="Design library"><sw-icon name="books"></sw-icon></button>
	<button aria-label="File explorer"><sw-icon name="folder"></sw-icon></button>
	<button aria-label="View palette"><sw-icon name="palette"></sw-icon></button>
	<button aria-label="Appearances"><sw-icon name="ball"></sw-icon></button>
	<button aria-label="Custom properties"><sw-icon name="plist"></sw-icon></button>
	<button aria-label="Updates"><sw-icon name="globe"></sw-icon></button>
	<button aria-label="Forum"><sw-icon name="forum"></sw-icon></button>
`);

define('graphics-area', `
	<style>
		${RESET}
		:host { display: block; position: relative; flex: 1; min-width: 0; min-height: 0; }
		model-scene { position: absolute; inset: 0; }
		.tree { position: absolute; left: 0; top: 5px; display: flex; align-items: center; gap: 3px; height: 16px; --icon: 14px; }
		.tree button { width: 14px; --icon: 8px; }
		.tree span { white-space: pre; }
		.views { position: absolute; left: calc(50% - 139px); top: 4px; display: flex; align-items: center; gap: 4px; height: 16px; color: #888; --icon: 16px; opacity: .85; }
		.views button.c { width: 8px; --icon: 8px; }
		.doc { position: absolute; right: 5px; top: -12px; display: flex; color: #999; --icon: 11px; }
		.doc button { width: 20px; height: 14px; }
		.ok, .no { position: absolute; opacity: .25; --icon: 24px; }
		.ok { right: 57px; top: 25px; }
		.no { right: 23px; top: 48px; }
		task-pane { position: absolute; right: 0; top: 23px; }
	</style>
	<model-scene></model-scene>
	<div class="tree"><button aria-label="Expand"><sw-icon name="play"></sw-icon></button><sw-icon name="partbox"></sw-icon><span>Train Whistle V3  (Default...</span></div>
	<div class="views">
		<button aria-label="Zoom to fit"><sw-icon name="zoomfit"></sw-icon></button>
		<button aria-label="Zoom to area"><sw-icon name="zoomarea"></sw-icon></button>
		<button aria-label="Previous view"><sw-icon name="prev"></sw-icon></button>
		<button aria-label="Section view"><sw-icon name="section"></sw-icon></button>
		<button aria-label="Dynamic annotation"><sw-icon name="display"></sw-icon></button>
		<button aria-label="View orientation"><sw-icon name="orient"></sw-icon></button><button class="c" aria-label="Orientation options"><sw-icon name="caret"></sw-icon></button>
		<button aria-label="Display style"><sw-icon name="style"></sw-icon></button><button class="c" aria-label="Style options"><sw-icon name="caret"></sw-icon></button>
		<button aria-label="Hide or show items"><sw-icon name="hide"></sw-icon></button><button class="c" aria-label="Hide options"><sw-icon name="caret"></sw-icon></button>
		<button aria-label="Edit appearance"><sw-icon name="appear"></sw-icon></button>
		<button aria-label="Apply scene"><sw-icon name="scene"></sw-icon></button><button class="c" aria-label="Scene options"><sw-icon name="caret"></sw-icon></button>
		<button aria-label="View settings"><sw-icon name="monitor"></sw-icon></button><button class="c" aria-label="Setting options"><sw-icon name="caret"></sw-icon></button>
	</div>
	<div class="doc">
		<button aria-label="Dock left"><sw-icon name="dockleft"></sw-icon></button>
		<button aria-label="Dock right"><sw-icon name="dockright"></sw-icon></button>
		<button aria-label="Minimize document"><sw-icon name="min"></sw-icon></button>
		<button aria-label="Restore document"><sw-icon name="restore"></sw-icon></button>
		<button aria-label="Close document"><sw-icon name="close"></sw-icon></button>
	</div>
	<button class="ok" aria-label="Accept"><sw-icon name="bigtick"></sw-icon></button>
	<button class="no" aria-label="Discard"><sw-icon name="bigcross"></sw-icon></button>
	<task-pane></task-pane>
`);

/*
Bottom bars
*/
define('sheet-tabs', `
	<style>
		${RESET}
		:host { display: flex; height: 13px; box-sizing: border-box; background: #f7f7f7; border-top: 1px solid #999; border-bottom: 1px solid #bbb; }
		button { height: 11px; padding: 0 8px 2px; background: #d3d3d3; border-right: 1px solid #999; line-height: 10px; }
		.nav { width: 13px; padding: 0; background: #c2c2c2; color: #999; --icon: 10px; }
		[aria-selected=true] { background: #fff; font-weight: 700; padding: 0 6px 2px 9px; }
		.last { padding: 0 13px 2px 7px; }
	</style>
	<button class="nav" aria-label="First tab"><sw-icon name="first"></sw-icon></button>
	<button class="nav" aria-label="Previous tab"><sw-icon name="back"></sw-icon></button>
	<button class="nav" aria-label="Next tab"><sw-icon name="play"></sw-icon></button>
	<button class="nav" aria-label="Last tab"><sw-icon name="last"></sw-icon></button>
	<button role="tab" aria-selected="true">Model</button>
	<button role="tab">3D Views</button>
	<button role="tab" class="last">Motion Study 1</button>
`);

define('status-bar', `
	<style>
		:host { display: flex; align-items: center; height: 14px; box-sizing: border-box; padding: 0 2px 0 1px; background: #f7f7f7; --icon: 12px; }
		.msg { flex: 1; }
		.x { width: 46px; }
		.y { width: 36px; }
		.z { width: 28px; }
		.def { width: 68px; }
		.mode { width: 80px; }
		.units { width: 53px; padding-left: 60px; margin-right: -18px; color: #b5b5b5; }
		sw-icon { margin-right: 6px; }
	</style>
	<span class="msg">Select a handle to modify parameters</span>
	<span class="x">2.14in</span><span class="y">1.46in</span><span class="z">0in</span>
	<span class="def">Fully Defined</span><span class="mode">Editing Sketch4</span>
	<sw-icon name="light"></sw-icon><sw-icon name="warn"></sw-icon>
	<span class="units">IPS</span><sw-icon name="up" style="--icon: 7px; color: #888; margin-right: 20px"></sw-icon><sw-icon name="tag" style="margin: 0"></sw-icon>
`);

define('os-taskbar', `
	<style>
		${RESET}
		:host { display: flex; align-items: stretch; height: 31px; background: #060b14; color: #eee; --icon: 14px; }
		.apps { display: flex; flex: 1; }
		.apps button { width: 38px; border-bottom: 2px solid transparent; }
		.apps .run { width: 31px; margin: 0 3px 0 4px; border-bottom-color: #76b9ed; --icon: 18px; }
		.apps .on { width: 38px; margin: 0 0 0 2px; background: #35383f; border-bottom-color: #76b9ed; --icon: 18px; }
		.tray { display: flex; align-items: center; gap: 4px; padding-right: 17px; }
		.tray button { width: 14px; height: 31px; --icon: 13px; }
		.clock { width: 44px; margin-left: 4px; text-align: center; line-height: 14px; }
		.alerts { position: relative; margin-left: 9px; }
		.alerts b { position: absolute; left: 7px; top: 14px; width: 12px; height: 12px; border-radius: 50%; background: #3a3d42; border: 1px solid #888; font: 9px/10px "Open Sans", sans-serif; text-align: center; }
	</style>
	<div class="apps">
		<button aria-label="Start"><sw-icon name="windows"></sw-icon></button>
		<button aria-label="Search"><sw-icon name="glass"></sw-icon></button>
		<button aria-label="Task view"><sw-icon name="taskview"></sw-icon></button>
		<button class="run" aria-label="Pluto"><sw-icon name="pluto" style="--icon: 14px"></sw-icon></button>
		<button class="run" aria-label="File Explorer"><sw-icon name="explorer"></sw-icon></button>
		<button class="run" aria-label="Chrome"><sw-icon name="chrome"></sw-icon></button>
		<button class="on" aria-label="SOLIDWORKS 2020"><sw-icon name="sw"></sw-icon></button>
	</div>
	<div class="tray">
		<button aria-label="People" style="margin-right: 10px"><sw-icon name="people"></sw-icon></button>
		<button aria-label="Hidden icons"><sw-icon name="chevup"></sw-icon></button>
		<button aria-label="Network"><sw-icon name="network"></sw-icon></button>
		<button aria-label="Volume"><sw-icon name="speaker"></sw-icon></button>
		<div class="clock">10:11 PM<br>6/13/2021</div>
		<button class="alerts" aria-label="Notifications"><sw-icon name="note" style="--icon: 14px"></sw-icon><b>3</b></button>
	</div>
`);

define('cad-app', `
	<style>
		:host { display: flex; flex-direction: column; height: 100vh; }
		.work {
			flex: 1; display: flex; flex-direction: column; min-height: 0;
			background:
				radial-gradient(ellipse 26% 75% at 84% 22%, rgba(212, 217, 230, .85), rgba(212, 217, 230, .5) 50%, rgba(212, 217, 230, 0)),
				radial-gradient(ellipse 30% 60% at 100% 25%, rgba(226, 229, 238, .7), rgba(226, 229, 238, 0)),
				linear-gradient(#fff 0%, #fff 30%, #f3f5f9 45%, #e3e6f0 57%, #f8f9fb 67%, #fff 76%, #f8f9fc 100%);
		}
		.body { flex: 1; display: flex; min-height: 0; }
	</style>
	<title-bar></title-bar>
	<command-ribbon></command-ribbon>
	<div class="work">
		<command-tabs></command-tabs>
		<div class="body">
			<property-panel></property-panel>
			<graphics-area></graphics-area>
		</div>
	</div>
	<sheet-tabs></sheet-tabs>
	<status-bar></status-bar>
	<os-taskbar></os-taskbar>
`);
</script>
</body>
</html>
